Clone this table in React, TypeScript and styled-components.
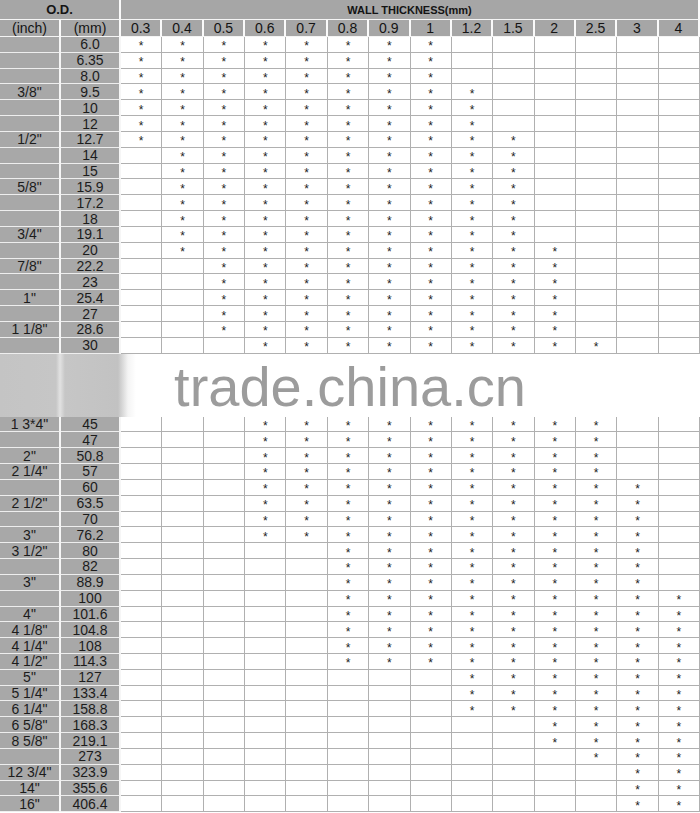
import React from 'react'
import styled, { createGlobalStyle } from 'styled-components'

const GlobalStyle = createGlobalStyle`
  html, body {
    margin: 0;
    padding: 0;
    background: #fff;
  }
  body {
    font-family: "Liberation Sans", Arial, sans-serif;
  }
`

const thickness = ['0.3', '0.4', '0.5', '0.6', '0.7', '0.8', '0.9', '1', '1.2', '1.5', '2', '2.5', '3', '4']

// inch, mm, first and last wall-thickness column that carries a star
type Size = [string, string, number, number]

const upper: Size[] = [
  ['', '6.0', 0, 7],
  ['', '6.35', 0, 7],
  ['', '8.0', 0, 7],
  ['3/8"', '9.5', 0, 8],
  ['', '10', 0, 8],
  ['', '12', 0, 8],
  ['1/2"', '12.7', 0, 9],
  ['', '14', 1, 9],
  ['', '15', 1, 9],
  ['5/8"', '15.9', 1, 9],
  ['', '17.2', 1, 9],
  ['', '18', 1, 9],
  ['3/4"', '19.1', 1, 9],
  ['', '20', 1, 10],
  ['7/8"', '22.2', 2, 10],
  ['', '23', 2, 10],
  ['1"', '25.4', 2, 10],
  ['', '27', 2, 10],
  ['1 1/8"', '28.6', 2, 10],
  ['', '30', 3, 11],
]

const lower: Size[] = [
  ['1 3*4"', '45', 3, 11],
  ['', '47', 3, 11],
  ['2"', '50.8', 3, 11],
  ['2 1/4"', '57', 3, 11],
  ['', '60', 3, 12],
  ['2 1/2"', '63.5', 3, 12],
  ['', '70', 3, 12],
  ['3"', '76.2', 3, 12],
  ['3 1/2"', '80', 5, 12],
  ['', '82', 5, 12],
  ['3"', '88.9', 5, 12],
  ['', '100', 5, 13],
  ['4"', '101.6', 5, 13],
  ['4 1/8"', '104.8', 5, 13],
  ['4 1/4"', '108', 5, 13],
  ['4 1/2"', '114.3', 5, 13],
  ['5"', '127', 8, 13],
  ['5 1/4"', '133.4', 8, 13],
  ['6 1/4"', '158.8', 8, 13],
  ['6 5/8"', '168.3', 10, 13],
  ['8 5/8"', '219.1', 10, 13],
  ['', '273', 11, 13],
  ['12 3/4"', '323.9', 12, 13],
  ['14"', '355.6', 12, 13],
  ['16"', '406.4', 12, 13],
]

const Sheet = styled.div`
  display: grid;
  width: 700px;
  grid-template-columns: 61px 60px repeat(14, 1fr);
  grid-template-rows: 20px 17px repeat(20, 15.84px) 63px repeat(25, 15.84px);
`

const HeadCell = styled.div<{ $span?: string; $bold?: boolean; $size?: number }>`
  grid-column: ${(p) => p.$span || 'auto'};
  display: flex;
  align-items: center;
  justify-content: center;
  box-sizing: border-box;
  background: #a6a6a6;
  border-right: 2px solid #fafafa;
  border-bottom: 1px solid #f4f4f4;
  color: #141414;
  font-size: ${(p) => p.$size || 14}px;
  font-weight: ${(p) => (p.$bold ? 700 : 400)};
  white-space: nowrap;
  overflow: hidden;
`

const LabelCell = styled.div`
  display: flex;
  align-items: center;
  justify-content: center;
  box-sizing: border-box;
  background: #a8a8a8;
  border-right: 2px solid #f6f6f6;
  border-bottom: 1px solid #eeeeee;
  color: #1c1c1c;
  font-size: 14px;
  white-space: pre;
  overflow: hidden;
`

const MarkCell = styled.div`
  display: flex;
  align-items: center;
  justify-content: center;
  box-sizing: border-box;
  padding-top: 4px;
  background: #fff;
  border-right: 1px solid #b0b0b0;
  border-bottom: 1px solid #b0b0b0;
  color: #222;
  font-size: 12px;
  line-height: 1;
  overflow: hidden;
`

const Band = styled.div`
  grid-column: 1 / -1;
  display: flex;
  align-items: center;
  justify-content: center;
  background: linear-gradient(
    90deg,
    #c4c4c4 0,
    #c6c6c6 56px,
    #e2e2e2 60px,
    #c6c6c6 65px,
    #c2c2c2 118px,
    #f4f4f4 128px,
    #fff 136px
  );
`

const Watermark = styled.span`
  font-family: "Liberation Sans", Arial, sans-serif;
  font-size: 56px;
  line-height: 63px;
  padding-top: 3px;
  color: #9c9c9c;
`

const SizeRow = ({ size }: { size: Size }) => {
  const [inch, mm, from, to] = size
  return (
    <>
      <LabelCell>{inch}</LabelCell>
      <LabelCell>{mm}</LabelCell>
      {thickness.map((t, i) => (
        <MarkCell key={t}>{i >= from && i <= to ? '*' : ''}</MarkCell>
      ))}
    </>
  )
}

const App = () => {
  return (
    <>
      <GlobalStyle />
      <Sheet>
        <HeadCell $span="1 / 3" $bold $size={13}>O.D.</HeadCell>
        <HeadCell $span="3 / -1" $bold $size={11}>WALL THICKNESS(mm)</HeadCell>

        <HeadCell>(inch)</HeadCell>
        <HeadCell>(mm)</HeadCell>
        {thickness.map((t) => (
          <HeadCell key={t}>{t}</HeadCell>
        ))}

        {upper.map((s) => (
          <SizeRow key={s[1]} size={s} />
        ))}

        <Band>
          <Watermark>trade.china.cn</Watermark>
        </Band>

        {lower.map((s) => (
          <SizeRow key={s[1]} size={s} />
        ))}
      </Sheet>
    </>
  )
}

export default App
